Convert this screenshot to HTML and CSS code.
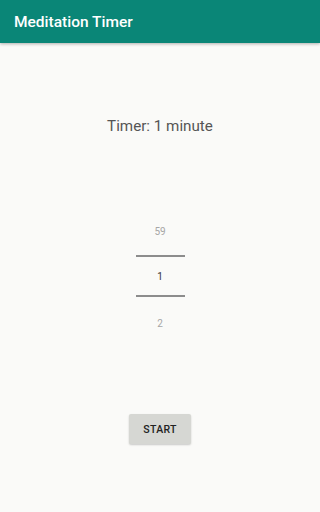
FILE: index.html
```html
<!DOCTYPE html>
<html>
<head>
<meta charset="utf-8">
<link rel="stylesheet" href="styles.css">
</head>
<body>
<header class="appbar"><span class="title">Meditation Timer</span></header>
<main class="content">
  <div class="timer-label">Timer: 1 minute</div>
  <div class="picker">
    <div class="pick-item faded">59</div>
    <div class="divider"></div>
    <div class="pick-item selected">1</div>
    <div class="divider"></div>
    <div class="pick-item faded">2</div>
  </div>
  <button class="start-btn">START</button>
</main>
</body>
</html>
```
FILE: styles.css
```css
html, body {
  margin: 0;
  padding: 0;
  height: 100%;
}
body {
  background: #fafaf8;
  font-family: Roboto, "Liberation Sans", sans-serif;
  display: flex;
  flex-direction: column;
}
.appbar {
  height: 43px;
  background: #0a8677;
  display: flex;
  align-items: center;
  padding-left: 14px;
  box-shadow: 0 1px 3px rgba(0,0,0,0.3);
  position: relative;
  z-index: 1;
}
.title {
  color: #ffffff;
  font-size: 15.5px;
  font-weight: 500;
}
.content {
  display: flex;
  flex-direction: column;
  align-items: center;
}
.timer-label {
  margin-top: 74px;
  font-size: 15.2px;
  color: #555555;
  line-height: 19px;
}
.picker {
  margin-top: 90px;
  width: 49px;
  display: flex;
  flex-direction: column;
  align-items: center;
}
.pick-item {
  font-size: 10px;
  line-height: 12px;
  text-align: center;
}
.faded { color: #a6a6a6; }
.selected { color: #333333; }
.divider {
  width: 49px;
  height: 2px;
  background: #8c8c8c;
}
.picker .pick-item:first-child { margin-bottom: 17px; }
.picker .selected { margin: 14px 0 12px; }
.picker .pick-item:last-child { margin-top: 21px; }
.start-btn {
  margin-top: 84px;
  width: 62px;
  height: 30px;
  border: none;
  border-radius: 2px;
  background: #d6d7d3;
  color: #222222;
  font-family: Roboto, "Liberation Sans", sans-serif;
  font-size: 10.5px;
  font-weight: 500;
  letter-spacing: 0.3px;
  box-shadow: 0 1px 2px rgba(0,0,0,0.2);
  padding: 0;
}
```
